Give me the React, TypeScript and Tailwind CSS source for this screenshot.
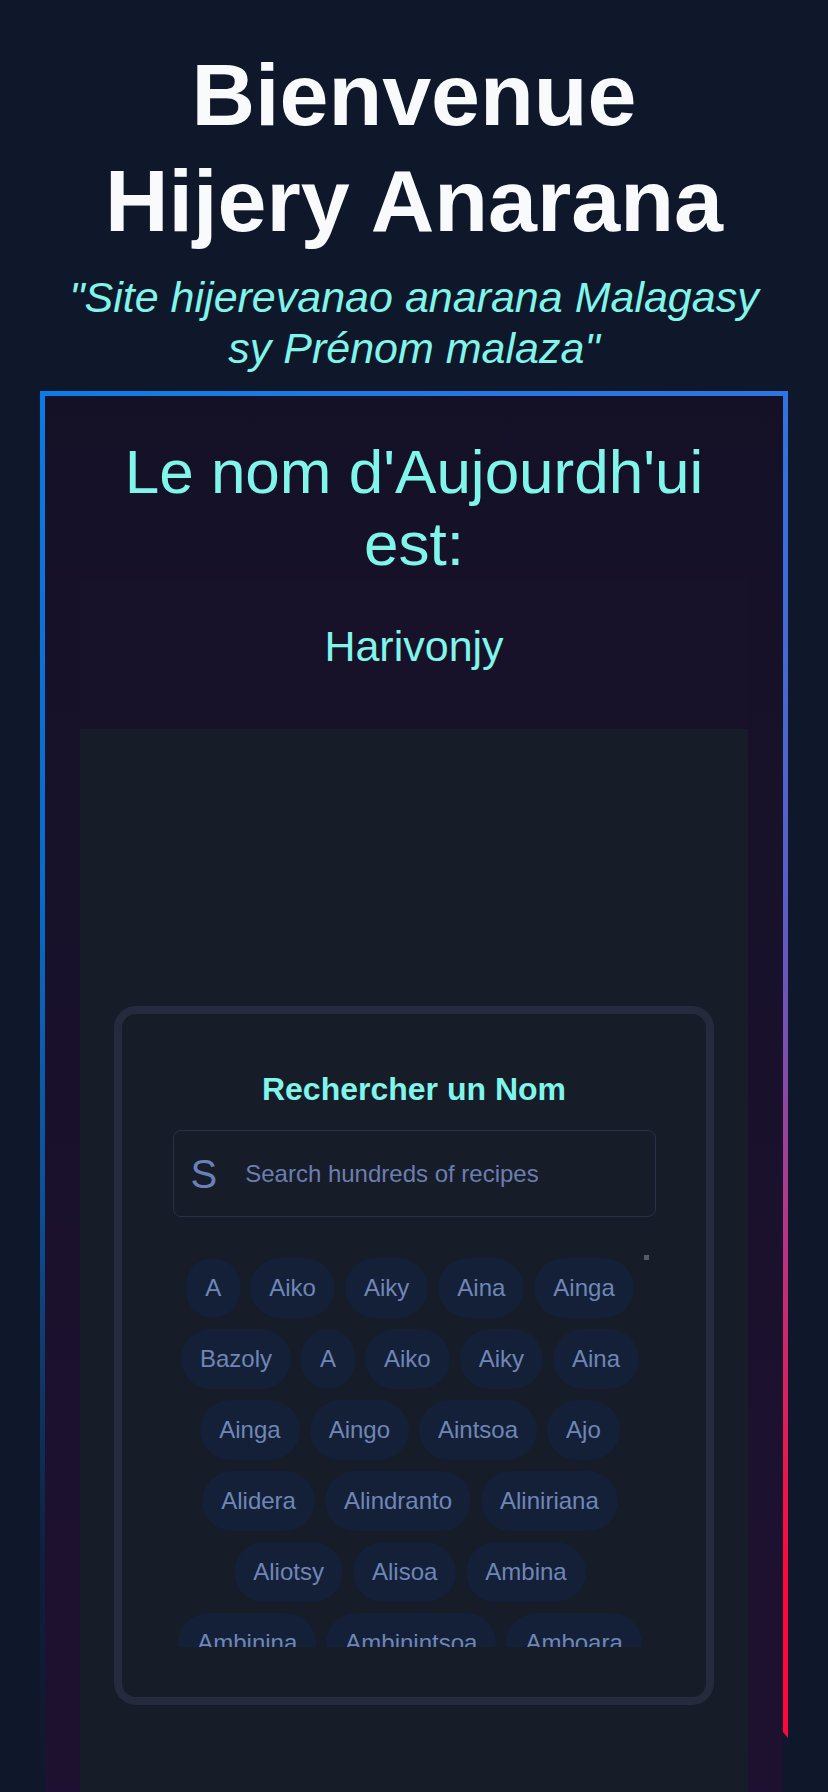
const names = [
  'A', 'Aiko', 'Aiky', 'Aina', 'Ainga',
  'Bazoly', 'A', 'Aiko', 'Aiky', 'Aina',
  'Ainga', 'Aingo', 'Aintsoa', 'Ajo',
  'Alidera', 'Alindranto', 'Aliniriana',
  'Aliotsy', 'Alisoa', 'Ambina',
  'Ambinina', 'Ambinintsoa', 'Amboara',
  'Ambohitra', 'Anja', 'Andry',
];

function SearchCard() {
  return (
    <div className="rounded-[22px] border-[8px] border-[#252b3d] bg-[#161c28] pt-[55px] pb-[50px]">
      <h3 className="text-center text-[32px] leading-[40px] font-bold text-[#80f5ea]">Rechercher un Nom</h3>
      <div className="mx-auto mt-[21px] flex h-[87px] w-[483px] items-center rounded-lg border border-[#2a3044] pl-[17px]">
        <span className="text-[40px] leading-none text-[#6b80b8]">S</span>
        <input
          className="ml-[28px] flex-1 bg-transparent text-2xl text-[#6c7eb0] outline-none placeholder:text-[#6c7eb0]"
          placeholder="Search hundreds of recipes"
        />
      </div>
      <div className="relative mx-auto mt-[33px] h-[397px] w-[483px] overflow-hidden pt-2 pr-2">
        <div className="absolute top-[5px] right-[7px] h-[5px] w-[5px] bg-[#555a66]" />
        <div className="flex flex-wrap justify-center gap-x-[10px] gap-y-[11px]">
          {names.map((n, i) => (
            <span key={i} className="h-[60px] rounded-full bg-[#132038] px-[19px] text-2xl leading-[60px] text-[#6f86b6]">
              {n}
            </span>
          ))}
        </div>
      </div>
    </div>
  );
}

export default function App() {
  return (
    <div className="min-h-screen overflow-hidden bg-[#0f172a] font-['Liberation_Sans',Arial,sans-serif]">
      <header className="pt-[42px] text-center">
        <h1 className="text-[88px] leading-[106px] font-bold text-[#f8fafc]">
          Bienvenue
          <br />
          Hijery Anarana
        </h1>
        <p className="mt-[18px] px-[48px] text-[43px] leading-[51px] italic text-[#80f5ea]">
          "Site hijerevanao anarana Malagasy sy Prénom malaza"
        </p>
      </header>

      <div className="mx-10 mt-[17px]">
        <div className="h-[5px] bg-gradient-to-r from-[#0a7ce6] to-[#2f74e0]" />
        <div className="flex">
          <div className="h-[1396px] w-[5px] shrink-0 bg-[linear-gradient(to_bottom,#0b7ae6_0%,#0a6ac8_36%,#0d4f98_58%,#0f3560_72%,#0e1f3d_83%,#0f172a_100%)]" />
          <div className="flex-1 bg-gradient-to-b from-[#141127] to-[#1f1131] pt-[40px]">
            <h2 className="px-[40px] text-center text-[62px] leading-[72px] text-[#80f5ea]">Le nom d'Aujourdh'ui est:</h2>
            <div className="mx-[35px]">
              <div className="bg-white/[0.006] pt-[40px] pb-[57px] text-center text-[43px] leading-[52px] text-[#80f5ea]">
                Harivonjy
              </div>
              <div className="bg-[#161c28] px-[34px] pt-[277px] pb-[160px]">
                <SearchCard />
              </div>
            </div>
          </div>
          <div className="h-[1342px] w-[5px] shrink-0 self-start bg-[linear-gradient(to_bottom,#2f74e0_0%,#5a5ec8_37%,#7c4eae_49%,#b0388a_60%,#e8174f_80%,#ff073c_88%,#ff073c_100%)] [clip-path:polygon(0_0,100%_0,100%_100%,0_calc(100%-6px))]" />
        </div>
      </div>
    </div>
  );
}
